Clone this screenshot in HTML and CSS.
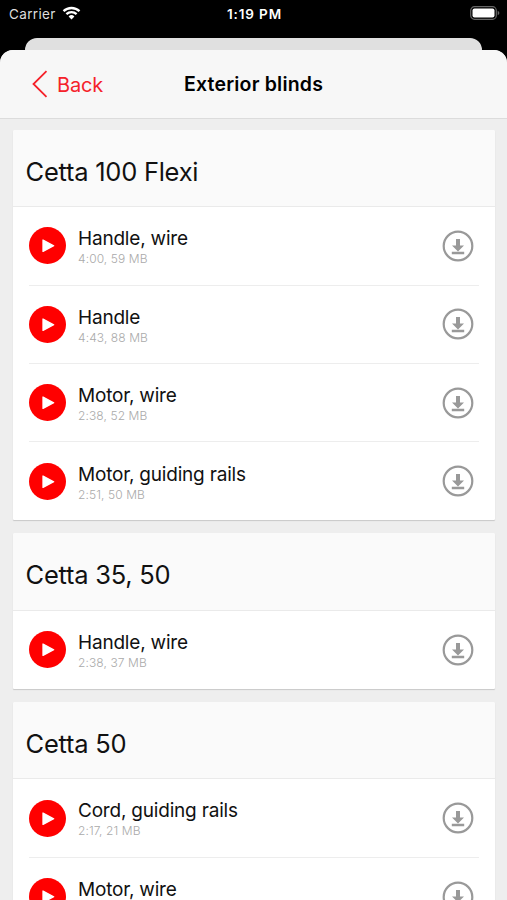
FILE: index.html
```html
<!DOCTYPE html>
<html lang="en">
<head>
    <meta charset="UTF-8">
    <meta name="viewport" content="width=device-width, initial-scale=1.0">
    <title>Exterior blinds</title>
    <link rel="stylesheet" href="styles.css">
</head>
<body>
    <svg width="0" height="0" class="symbols">
        <symbol id="play" viewBox="0 0 37 37">
            <circle cx="18.5" cy="18.5" r="18.5" fill="#f00"/>
            <path d="M14 13v11.4L24.7 18.7z" fill="#fff" stroke="#fff" stroke-width="1.3" stroke-linejoin="round"/>
        </symbol>
        <symbol id="download" viewBox="0 0 32 32">
            <circle cx="16" cy="16" r="14.3" fill="none" stroke="#999" stroke-width="2.2"/>
            <path d="M14 9h4v6.4h4l-6 6-6-6h4zM9.8 21.8h12.4v2.4H9.8z" fill="#999"/>
        </symbol>
    </svg>

    <div class="status">
        <div class="carrier">
            <span>Carrier</span>
            <svg class="wifi" width="19" height="14" viewBox="0 0 18 14">
                <path d="M1 5.2a11.6 11.6 0 0 1 16 0M3.9 8.2a7.4 7.4 0 0 1 10.2 0" fill="none" stroke="#fff" stroke-width="2.3"/>
                <path d="M9 13.4l-2.9-3a4.2 4.2 0 0 1 5.8 0z" fill="#fff"/>
            </svg>
        </div>
        <div class="time">1:19 PM</div>
        <div class="battery">
            <svg width="30" height="14" viewBox="0 0 30 14">
                <rect x=".7" y=".7" width="25.6" height="12.6" rx="3.8" fill="none" stroke="#666" stroke-width="1.2"/>
                <rect x="2.5" y="2.4" width="22" height="9.2" rx="2" fill="#fff"/>
                <path d="M27.7 4.7q1.7.7 1.7 2.3t-1.7 2.3z" fill="#666"/>
            </svg>
        </div>
    </div>

    <div class="behind"></div>

    <div class="sheet">
        <div class="navbar">
            <a class="back" href="#">
                <svg width="16" height="28" viewBox="0 0 16 28">
                    <path d="M14.5 1.2L1.5 14l13 12.8" fill="none" stroke="#f5222a" stroke-width="1.8"/>
                </svg>
                <span>Back</span>
            </a>
            <h1>Exterior blinds</h1>
        </div>

        <div class="list">
            <div class="card">
                <h2>Cetta 100 Flexi</h2>
                <div class="row">
                    <svg class="play"><use href="#play"/></svg>
                    <div class="info"><p class="name">Handle, wire</p><p class="meta">4:00, 59 MB</p></div>
                    <svg class="download"><use href="#download"/></svg>
                </div>
                <div class="row">
                    <svg class="play"><use href="#play"/></svg>
                    <div class="info"><p class="name">Handle</p><p class="meta">4:43, 88 MB</p></div>
                    <svg class="download"><use href="#download"/></svg>
                </div>
                <div class="row">
                    <svg class="play"><use href="#play"/></svg>
                    <div class="info"><p class="name">Motor, wire</p><p class="meta">2:38, 52 MB</p></div>
                    <svg class="download"><use href="#download"/></svg>
                </div>
                <div class="row">
                    <svg class="play"><use href="#play"/></svg>
                    <div class="info"><p class="name">Motor, guiding rails</p><p class="meta">2:51, 50 MB</p></div>
                    <svg class="download"><use href="#download"/></svg>
                </div>
            </div>

            <div class="card">
                <h2>Cetta 35, 50</h2>
                <div class="row">
                    <svg class="play"><use href="#play"/></svg>
                    <div class="info"><p class="name">Handle, wire</p><p class="meta">2:38, 37 MB</p></div>
                    <svg class="download"><use href="#download"/></svg>
                </div>
            </div>

            <div class="card">
                <h2>Cetta 50</h2>
                <div class="row">
                    <svg class="play"><use href="#play"/></svg>
                    <div class="info"><p class="name">Cord, guiding rails</p><p class="meta">2:17, 21 MB</p></div>
                    <svg class="download"><use href="#download"/></svg>
                </div>
                <div class="row">
                    <svg class="play"><use href="#play"/></svg>
                    <div class="info"><p class="name">Motor, wire</p></div>
                    <svg class="download"><use href="#download"/></svg>
                </div>
            </div>
        </div>
    </div>
</body>
</html>
```
FILE: styles.css
```css
* {
    box-sizing: border-box;
}

body {
    font-family: Inter, "Liberation Sans", sans-serif;
    background-color: #000;
    color: #111;
    margin: 0;
    height: 900px;
    overflow: hidden;
    display: flex;
    flex-direction: column;
}

h1, h2, p {
    margin: 0;
    font-weight: 400;
}

.symbols {
    position: absolute;
}

.status {
    height: 38px;
    flex: none;
    display: grid;
    grid-template-columns: 1fr auto 1fr;
    padding: 6px 7px 0 9px;
    color: #fff;
    font-size: 13.5px;
    line-height: 16px;
}

.carrier {
    display: flex;
    gap: 6px;
    color: #ddd;
    letter-spacing: 0.35px;
}

.time {
    font-weight: 600;
    font-size: 13.5px;
    letter-spacing: 0.85px;
}

.battery {
    text-align: right;
}

.behind {
    height: 12px;
    flex: none;
    margin: 0 25px;
    background-color: #e0e0e0;
    border-radius: 12px 12px 0 0;
}

.sheet {
    flex: 1;
    min-height: 0;
    overflow: hidden;
    background-color: #eee;
    border-radius: 13px 13px 0 0;
}

.navbar {
    height: 69px;
    display: grid;
    grid-template-columns: 1fr auto 1fr;
    align-items: center;
    padding: 0 32px;
    background-color: #f7f7f7;
    border-bottom: 1px solid #dcdcdc;
}

.back {
    display: flex;
    align-items: center;
    gap: 9px;
    color: #f5222a;
    font-size: 20px;
    letter-spacing: -0.2px;
    text-decoration: none;
}

.back span {
    padding-top: 2px;
}

h1 {
    font-size: 19.5px;
    font-weight: 600;
    letter-spacing: 0.2px;
    color: #000;
}

.list {
    padding: 11px 12px 0 13px;
    display: flex;
    flex-direction: column;
    gap: 13px;
}

.card {
    background-color: #fff;
    border-radius: 2px 2px 1px 1px;
    box-shadow: 0 1px 1px #c8c8c8;
}

h2 {
    height: 77.3px;
    padding: 5px 12.5px 0;
    line-height: 74px;
    font-size: 25.5px;
    letter-spacing: -0.25px;
    background-color: #fafafa;
    border-bottom: 1px solid #eaeaea;
    border-radius: 2px 2px 0 0;
}

.row {
    height: 78.3px;
    margin: 0 16px;
    display: flex;
    align-items: center;
    border-bottom: 1px solid #ededed;
}

.row:last-child {
    border-bottom: none;
}

.play {
    width: 37px;
    height: 37px;
}

.info {
    flex: 1;
    height: 40px;
    padding: 1.3px 0 0 12px;
}

.name {
    font-size: 19px;
    line-height: 24px;
    letter-spacing: -0.2px;
}

.meta {
    font-size: 12px;
    font-weight: 300;
    line-height: 16px;
    letter-spacing: 0.1px;
    color: #aaa;
}

.download {
    width: 32px;
    height: 32px;
    margin-right: 5px;
}
```
